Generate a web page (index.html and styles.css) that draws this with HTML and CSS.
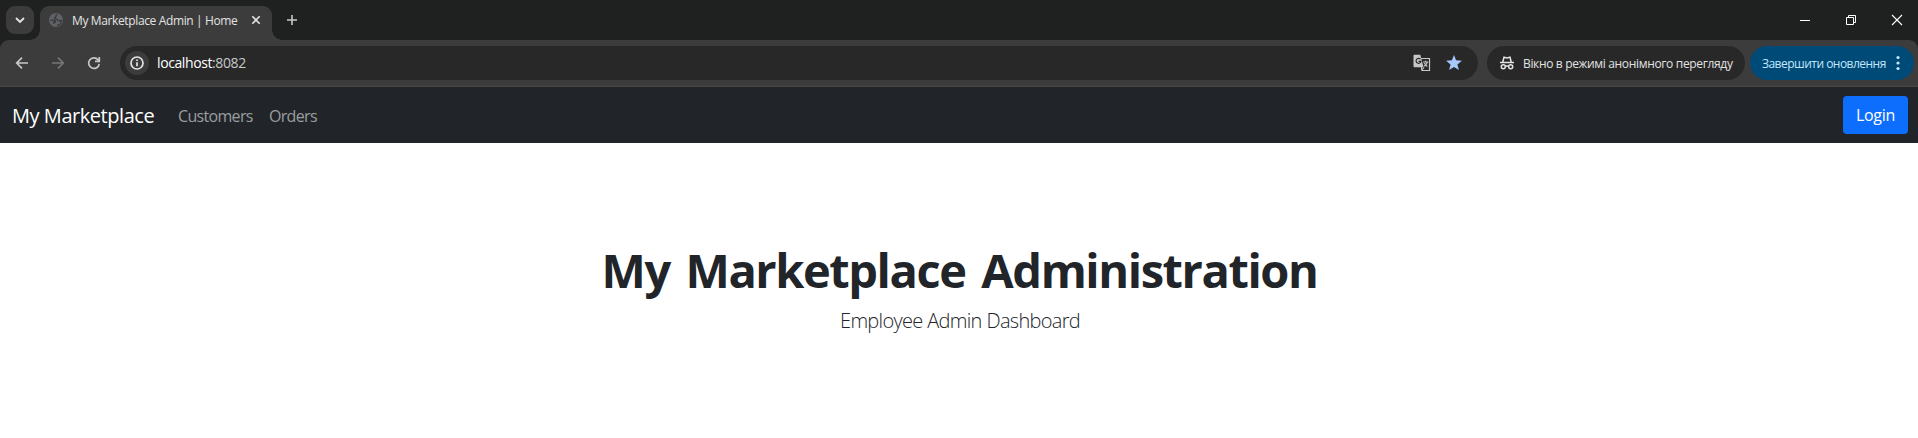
FILE: index.html
```html
<!DOCTYPE html>
<html lang="en">
<head>
<meta charset="utf-8">
<title>My Marketplace Admin | Home</title>
<link rel="stylesheet" href="styles.css">
</head>
<body>
<header class="browser">
<div class="tabstrip">
  <div class="tab-search"><svg width="28" height="28" fill="none" stroke="#e3e3e3" stroke-width="1.9"><path d="M10 12l4 4 4-4"/></svg></div>
  <div class="tab">
    <svg class="favicon" width="14" height="14" viewBox="0 0 14 14"><circle cx="7" cy="7" r="7" fill="#5f6368"/><path d="M8.300 1.300C6 1.500 8 3.700 6.200 4.300 4.800 4.800 5.800 6.200 7.200 6.200 9 6.200 8.200 7.600 9.700 7.700 11 7.800 12 7.500 12.600 7.500 12.300 10 10.500 12 8 12.500M1.400 7.300H4.500C6.200 7.400 6.600 8.400 6.400 9.300H4.800V11" fill="none" stroke="#3c3c3c" stroke-width="1.400"/></svg>
    <span class="tab-title">My Marketplace Admin | Home</span>
    <svg class="tab-close" width="10" height="10" fill="none" stroke="#e3e3e3" stroke-width="1.6"><path d="M1.300 1.300l7.400 7.400M8.700 1.300L1.300 8.700"/></svg>
  </div>
  <svg class="new-tab" width="12" height="12" fill="none" stroke="#c7c7c7" stroke-width="1.6"><path d="M6 1v10M1 6h10"/></svg>
  <div class="window-controls">
    <svg width="12" height="12" fill="none" stroke="#fff"><path d="M1 6.500h10"/></svg>
    <svg width="12" height="12" fill="none" stroke="#fff"><path d="M1.500 3.500h7v7h-7zM3.500 3.500v-2h7v7h-2"/></svg>
    <svg width="12" height="12" fill="none" stroke="#fff" stroke-width="1.100"><path d="M1 1l10 10M11 1L1 11"/></svg>
  </div>
</div>
<div class="toolbar">
  <div class="nav-buttons">
    <svg width="16" height="16" fill="none" stroke="#c7c7c7" stroke-width="1.700"><path d="M14 8H3M8 2.700L2.700 8 8 13.300"/></svg>
    <svg width="16" height="16" fill="none" stroke="#757575" stroke-width="1.700"><path d="M2 8h11M8 2.700L13.300 8 8 13.300"/></svg>
    <svg width="16" height="16" fill="none" stroke="#c7c7c7" stroke-width="1.700"><path d="M13.200 8.800A5.300 5.300 0 1 1 12 4.700L13.300 6M13.300 2v4.300H9"/></svg>
  </div>
  <div class="omnibox">
    <span class="site-info"><svg width="16" height="16" fill="none" stroke="#e3e3e3" stroke-width="1.700"><circle cx="8" cy="8" r="6"/><path d="M8 7.200v4M8 4.400v1.600"/></svg></span>
    <span class="url">localhost<span class="port">:8082</span></span>
    <svg class="translate" width="18" height="18" viewBox="0 0 18 18"><path d="M7 4.500h9.500v12H9z" fill="none" stroke="#c7c7c7" stroke-width="1.200"/><path d="M1.500.7h5.800l3.200 12.500h-9Q.5 13.200.5 12.200V1.700q0-1 1-1z" fill="#c7c7c7"/><path d="M7.500 5.200A2.500 2.500 0 1 0 8 7.400H5.500" fill="none" stroke="#282828" stroke-width="1.200"/><path d="M10 8h5.300M12.500 6.700V8M14.300 8c-.5 2-1.800 3.300-3.300 4.300M11.300 9.200l3 3.500M9 16l2-2.800" fill="none" stroke="#c7c7c7" stroke-width="1.100"/></svg>
    <svg class="star" width="18" height="18" viewBox="0 0 18 18"><path d="M9 1l2.100 5.300 5.800.4-4.500 3.700 1.500 5.700L9 13l-4.900 3.100 1.500-5.700L1.100 6.700l5.800-.4z" fill="#a8c7fa"/></svg>
  </div>
  <div class="incognito">
    <svg width="16" height="16" viewBox="0 0 16 16" fill="none" stroke="#e3e3e3" stroke-width="1.500"><path d="M1 7.500h14M3.800 7L5 2.200l3 .7 3-.7L12.200 7"/><circle cx="4.300" cy="11.700" r="2"/><circle cx="11.700" cy="11.700" r="2"/><path d="M6.300 11.300q1.700-.8 3.400 0"/></svg>
    <span class="incognito-label">Вікно в режимі анонімного перегляду</span>
  </div>
  <div class="update">
    <span class="update-label">Завершити оновлення</span>
    <svg width="4" height="16" fill="#c2e7ff"><circle cx="2" cy="2.500" r="1.600"/><circle cx="2" cy="8" r="1.600"/><circle cx="2" cy="13.500" r="1.600"/></svg>
  </div>
</div>
</header>
<nav class="navbar">
  <a class="brand">My Marketplace</a>
  <a class="link customers">Customers</a>
  <a class="link orders">Orders</a>
  <button class="login">Login</button>
</nav>
<main class="hero">
  <h1>My Marketplace Administration</h1>
  <p>Employee Admin Dashboard</p>
</main>
</body>
</html>
```
FILE: styles.css
```css
* { box-sizing: border-box; }
body { margin: 0; height: 438px; overflow: hidden; background: #fff; font-family: "Open Sans", "Noto Sans", sans-serif; color: #212529; white-space: nowrap; }
svg { display: block; flex: none; }
.browser { background: #1f2120; }
.tabstrip { height: 40px; display: flex; padding-left: 6px; }
.tab-search { width: 28px; height: 28px; margin-top: 6px; border-radius: 9px; background: #3c3c3c; }
.tab { position: relative; display: flex; align-items: center; width: 232px; height: 34px; margin: 6px 0 0 6px; padding: 0 0 6px 9px; border-radius: 9px 9px 0 0; background: #3c3c3c; }
.tab::before, .tab::after { content: ""; position: absolute; bottom: 0; width: 10px; height: 10px; }
.tab::before { left: -10px; background: radial-gradient(circle at 0 0, transparent 9.5px, #3c3c3c 10px); }
.tab::after { right: -10px; background: radial-gradient(circle at 100% 0, transparent 9.5px, #3c3c3c 10px); }
.tab-title { width: 166px; margin-left: 9px; padding-top: 1px; font-size: 12px; line-height: 18px; letter-spacing: -.37px; color: #e3e3e3; }
.tab-close { margin-left: 13px; }
.new-tab { margin: 14px 0 0 14px; }
.window-controls { display: flex; gap: 34px; margin: 14px 15px 0 auto; }
.toolbar { display: flex; align-items: center; height: 47px; padding: 0 4px 1px 14px; background: #3c3c3c; box-shadow: inset 0 -1px #484848; border-radius: 9px 9px 0 0; }
.toolbar > * { flex: none; }
.nav-buttons { display: flex; gap: 20px; width: 106px; }
.omnibox { display: flex; align-items: center; width: 1358px; height: 34px; padding: 0 15px 0 5px; border-radius: 17px; background: #282828; }
.site-info { display: grid; place-items: center; width: 24px; height: 24px; border-radius: 50%; background: #3c3c3c; }
.url { margin-left: 8px; font-size: 14px; line-height: 20px; letter-spacing: -.4px; color: #fff; }
.port { color: #c7c7c7; }
.translate { margin-left: auto; }
.star { margin-left: 14px; }
.incognito { display: flex; align-items: center; width: 258px; height: 34px; margin-left: 9px; padding-left: 12px; border-radius: 17px; background: #282828; color: #e3e3e3; font-size: 12px; letter-spacing: -.34px; }
.incognito-label { margin-left: 8px; }
.update { display: flex; align-items: center; justify-content: space-between; width: 164px; height: 34px; margin-left: 5px; padding: 0 14px 0 12px; border-radius: 17px; background: #004a77; color: #c2e7ff; font-size: 12px; letter-spacing: -.52px; }
.navbar { display: flex; align-items: center; height: 56px; padding: 0 10px 0 12px; background: #212529; }
.brand { width: 166px; padding-top: 1px; font-size: 20px; line-height: 30px; letter-spacing: -.45px; color: #fff; }
.link { padding-top: 1px; font-size: 16px; line-height: 24px; letter-spacing: -.68px; color: #9b9d9f; }
.customers { width: 91px; }
.login { width: 65px; height: 38px; margin-left: auto; padding: 0; border: 0; border-radius: 4px; background: #0d6efd; color: #fff; font: 16px/24px "Open Sans", sans-serif; letter-spacing: -.3px; }
.hero { padding-top: 98px; text-align: center; }
h1 { margin: 0 0 0 1px; font-size: 47px; line-height: 58px; font-weight: 700; letter-spacing: -1.43px; word-spacing: 5px; }
p { margin: 7px 0 0 2px; font-size: 20px; line-height: 30px; font-weight: 300; letter-spacing: -.7px; word-spacing: .3px; }
```
